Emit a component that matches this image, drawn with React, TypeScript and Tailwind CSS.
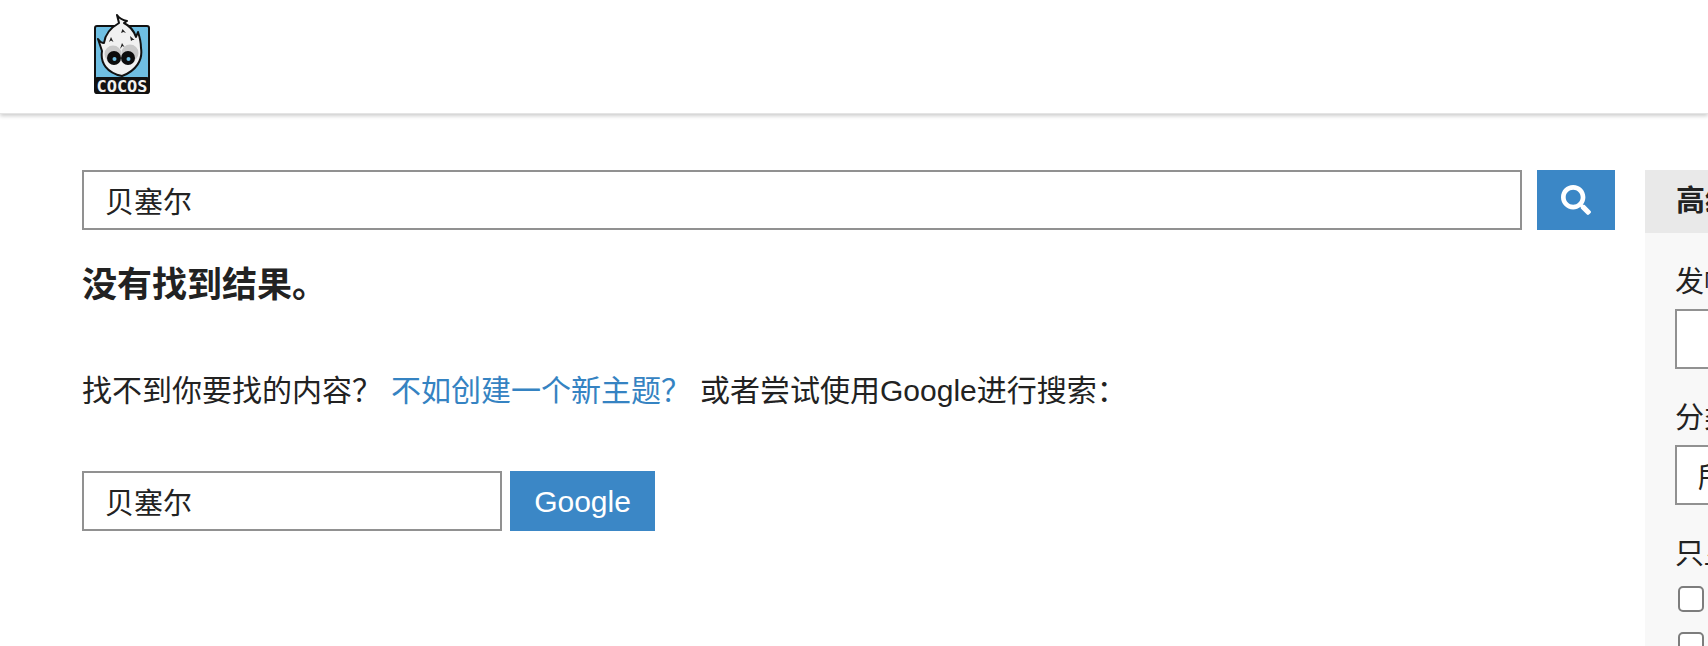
import { FaSearch } from 'react-icons/fa';

const FONT = "font-['Helvetica_Neue','Liberation_Sans','Noto_Sans_CJK_SC',sans-serif]";

function CocosLogo() {
  return (
    <svg width="56" height="81" viewBox="0 0 56 81" className="block">
      <rect x="1" y="12" width="54" height="67" rx="2" fill="#6fbfe3" stroke="#111" strokeWidth="2" />
      <rect x="1" y="63" width="54" height="17" rx="2" fill="#111" />
      <path
        d="M23 1 C25 4 28 6 33 7 L30 9 C36 12 40 17 42 23 L44 18 C46 24 47 29 47 34 C49 46 42 57 28 62 C13 59 6 49 8 37 L4 25 C6 28 8 29 10 29 C11 20 18 13 25 9 Z"
        fill="#f1f1f1"
        stroke="#111"
        strokeWidth="2"
        strokeLinejoin="round"
      />
      <circle cx="19" cy="40" r="8.500" fill="#c9c9c9" />
      <circle cx="36" cy="39" r="8.500" fill="#c9c9c9" />
      <circle cx="20" cy="44" r="7" fill="#0c0c0c" />
      <circle cx="34" cy="44" r="7" fill="#0c0c0c" />
      <circle cx="20.500" cy="45" r="2" fill="#6fbfe3" />
      <circle cx="34.500" cy="45" r="2" fill="#6fbfe3" />
      <path d="M27 19 l1.500 -4 l3.500 4 l-2.500 -1 z M15 28 l2 -5 l2.500 5 l-2.500 -1.500 z M37 27 l-1 -5 l4.500 4 l-2 0 z M26 35 l2 -6 l2.500 4 l-2 -1 z" fill="#222" />
      <text
        x="2.500"
        y="77.500"
        textLength="51"
        lengthAdjust="spacingAndGlyphs"
        fontFamily="'DejaVu Sans Mono', monospace"
        fontWeight="700"
        fontSize="16"
        fill="#f2f2f2"
      >
        COCOS
      </text>
    </svg>
  );
}

function Field({ width, value }: { width: string; value?: string }) {
  return (
    <input
      readOnly
      value={value ?? ''}
      className={`${width} h-[60px] border-2 border-[#919191] bg-white px-[21px] text-[29px] text-[#222] outline-none`}
    />
  );
}

export default function App() {
  return (
    <div className={`${FONT} h-[646px] w-[1708px] overflow-hidden bg-white text-[#222]`}>
      <header className="flex h-[114px] items-start border-b border-[#e4e4e4] pl-[94px] pt-[14px] shadow-[0_2px_4px_rgba(0,0,0,0.2)]">
        <CocosLogo />
      </header>

      <main className="flex gap-[30px] pl-[82px] pt-[56px]">
        <div className="w-[1533px] shrink-0">
          <div className="flex items-start gap-[15px]">
            <Field width="w-[1440px]" value="贝塞尔" />
            <button className="flex h-[60px] w-[78px] items-center justify-center bg-[#3b87c6] text-white">
              <FaSearch size={30} />
            </button>
          </div>

          <h3 className="mt-[32px] text-[35px] font-bold leading-[46px]">没有找到结果。</h3>

          <p className="mt-[63px] flex items-center gap-[9px] text-[30px] leading-[40px]">
            <span>找不到你要找的内容？</span>
            <a className="text-[#3583c2]">不如创建一个新主题？</a>
            <span>或者尝试使用Google进行搜索：</span>
          </p>

          <div className="mt-[60px] flex items-center gap-[8px]">
            <Field width="w-[420px]" value="贝塞尔" />
            <button className="h-[60px] w-[145px] bg-[#3b87c6] text-[30px] text-white">Google</button>
          </div>
        </div>

        <aside className="h-[476px] w-[400px] shrink-0 bg-[#f8f8f8]">
          <div className="flex h-[63px] items-center bg-[#e9e9e9] pl-[31px] text-[29px] font-bold">高级搜索</div>
          <div className="pl-[30px]">
            <div className="mt-[32px] text-[29px] leading-[34px]">发帖人</div>
            <div className="mt-[10px]">
              <Field width="w-[340px]" />
            </div>
            <div className="mt-[32px] text-[29px] leading-[34px]">分类</div>
            <div className="mt-[10px]">
              <Field width="w-[340px]" value="所有分类" />
            </div>
            <div className="mt-[32px] text-[29px] leading-[34px]">只显示</div>
            <div className="mt-[15px] flex flex-col gap-[20px] pl-[3px]">
              <span className="h-[26px] w-[26px] rounded-[5px] border-2 border-[#7d7d7d] bg-white" />
              <span className="h-[26px] w-[26px] rounded-[5px] border-2 border-[#7d7d7d] bg-white" />
            </div>
          </div>
        </aside>
      </main>
    </div>
  );
}
